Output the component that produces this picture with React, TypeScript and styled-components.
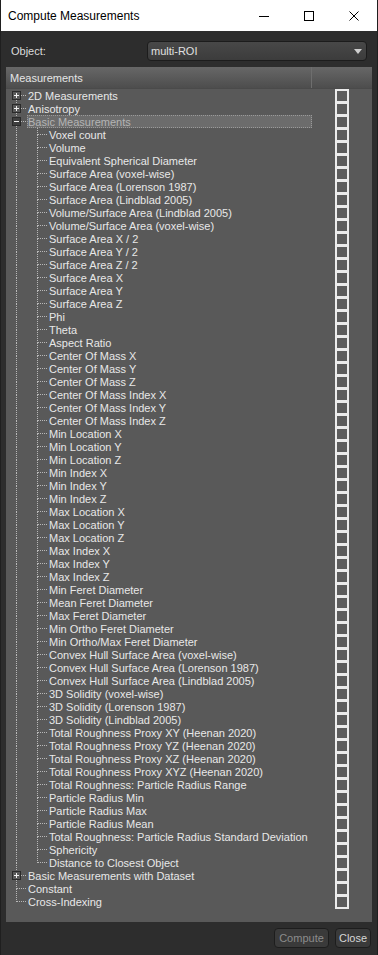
import React from "react";
import styled, { createGlobalStyle } from "styled-components";

const GlobalStyle = createGlobalStyle`
  html, body {
    margin: 0;
    padding: 0;
    background: #2d2d2d;
  }
  body {
    font-family: "Liberation Sans", Arial, sans-serif;
  }
`;

const Window = styled.div`
  width: 378px;
  height: 955px;
  display: flex;
  flex-direction: column;
  background: #2d2d2d;
  box-sizing: border-box;
  border-left: 1px solid #1f1f1f;
  border-right: 1px solid #1f1f1f;
  overflow: hidden;
`;

const TitleBar = styled.div`
  height: 31px;
  flex: none;
  background: #ffffff;
  display: flex;
  align-items: center;
  padding: 0 2px 0 8px;
  margin: 0 -1px;
`;

const Title = styled.div`
  flex: 1;
  font-size: 12px;
  color: #000;
`;

const Caption = styled.div`
  width: 45px;
  height: 31px;
  display: flex;
  align-items: center;
  justify-content: center;
`;

const Body = styled.div`
  flex: 1;
  display: flex;
  flex-direction: column;
  padding: 10px 5px 7px 5px;
  min-height: 0;
`;

const ObjectRow = styled.div`
  display: flex;
  align-items: center;
  height: 20px;
`;

const FieldLabel = styled.div`
  width: 136px;
  padding-left: 5px;
  font-size: 11px;
  color: #dcdcdc;
`;

const Combo = styled.div`
  flex: 1;
  height: 20px;
  margin-right: 5px;
  box-sizing: border-box;
  border: 1px solid #1c1c1c;
  border-radius: 4px;
  background: linear-gradient(#484848, #3c3c3c);
  display: flex;
  align-items: center;
  padding: 0 4px 0 3px;
  font-size: 11px;
  color: #e0e0e0;
`;

const ComboText = styled.div`
  flex: 1;
`;

const Panel = styled.div`
  margin-top: 6px;
  flex: 1;
  display: flex;
  flex-direction: column;
  background: #595959;
  width: 366px;
  min-height: 0;
`;

const Header = styled.div`
  height: 21px;
  flex: none;
  display: flex;
  border-bottom: 1px solid #4a4a4a;
`;

const HeaderCell = styled.div<{ $w: number }>`
  width: ${(p) => p.$w}px;
  box-sizing: border-box;
  background: linear-gradient(#676767, #5a5a5a 50%, #4d4d4d);
  border-right: 1px solid #6e6e6e;
  font-size: 11px;
  color: #e6e6e6;
  padding-left: 4px;
  display: flex;
  align-items: center;
  &:last-child {
    border-right: none;
  }
`;

const Tree = styled.div`
  display: flex;
  flex-direction: column;
`;

const Row = styled.div`
  height: 13px;
  display: flex;
`;

const TreeCol = styled.div`
  width: 306px;
  display: flex;
  flex: none;
`;

const Guide = styled.svg`
  width: 21px;
  height: 13px;
  flex: none;
  display: block;
`;

const Label = styled.div<{ $current?: boolean }>`
  flex: 1;
  height: 13px;
  box-sizing: border-box;
  font-size: 11px;
  line-height: ${(p) => (p.$current ? 12 : 14)}px;
  color: ${(p) => (p.$current ? "#b4b4b4" : "#e8e8e8")};
  white-space: nowrap;
  background: ${(p) => (p.$current ? "#6c6c6c" : "transparent")};
  border: ${(p) => (p.$current ? "1px dotted #9a9a9a" : "none")};
  padding-left: ${(p) => (p.$current ? 0 : 1)}px;
`;

const CheckCol = styled.div`
  width: 60px;
  flex: none;
  display: flex;
  justify-content: center;
`;

const CheckBox = styled.div`
  width: 14px;
  height: 14px;
  flex: none;
  box-sizing: border-box;
  border: 2px solid #ebebeb;
  background: #5c5c5c;
`;

const Footer = styled.div`
  margin-top: 6px;
  height: 20px;
  flex: none;
  display: flex;
  justify-content: flex-end;
  gap: 6px;
  padding-right: 1px;
`;

const Button = styled.div<{ $w: number; $disabled?: boolean }>`
  width: ${(p) => p.$w}px;
  height: 20px;
  box-sizing: border-box;
  border: 1px solid #1d1d1d;
  border-radius: 4px;
  background: #3a3a3a;
  font-size: 11px;
  line-height: 18px;
  text-align: center;
  color: ${(p) => (p.$disabled ? "#8c8c8c" : "#d6d6d6")};
`;

const basic = [
  "Voxel count",
  "Volume",
  "Equivalent Spherical Diameter",
  "Surface Area (voxel-wise)",
  "Surface Area (Lorenson 1987)",
  "Surface Area (Lindblad 2005)",
  "Volume/Surface Area (Lindblad 2005)",
  "Volume/Surface Area (voxel-wise)",
  "Surface Area X / 2",
  "Surface Area Y / 2",
  "Surface Area Z / 2",
  "Surface Area X",
  "Surface Area Y",
  "Surface Area Z",
  "Phi",
  "Theta",
  "Aspect Ratio",
  "Center Of Mass X",
  "Center Of Mass Y",
  "Center Of Mass Z",
  "Center Of Mass Index X",
  "Center Of Mass Index Y",
  "Center Of Mass Index Z",
  "Min Location X",
  "Min Location Y",
  "Min Location Z",
  "Min Index X",
  "Min Index Y",
  "Min Index Z",
  "Max Location X",
  "Max Location Y",
  "Max Location Z",
  "Max Index X",
  "Max Index Y",
  "Max Index Z",
  "Min Feret Diameter",
  "Mean Feret Diameter",
  "Max Feret Diameter",
  "Min Ortho Feret Diameter",
  "Min Ortho/Max Feret Diameter",
  "Convex Hull Surface Area (voxel-wise)",
  "Convex Hull Surface Area (Lorenson 1987)",
  "Convex Hull Surface Area (Lindblad 2005)",
  "3D Solidity (voxel-wise)",
  "3D Solidity (Lorenson 1987)",
  "3D Solidity (Lindblad 2005)",
  "Total Roughness Proxy XY (Heenan 2020)",
  "Total Roughness Proxy YZ (Heenan 2020)",
  "Total Roughness Proxy XZ (Heenan 2020)",
  "Total Roughness Proxy XYZ (Heenan 2020)",
  "Total Roughness: Particle Radius Range",
  "Particle Radius Min",
  "Particle Radius Max",
  "Particle Radius Mean",
  "Total Roughness: Particle Radius Standard Deviation",
  "Sphericity",
  "Distance to Closest Object",
];

type Expander = "none" | "plus" | "minus";

const tree: { label: string; expander: Expander; current?: boolean; children?: string[] }[] = [
  { label: "2D Measurements", expander: "plus" },
  { label: "Anisotropy", expander: "plus" },
  { label: "Basic Measurements", expander: "minus", current: true, children: basic },
  { label: "Basic Measurements with Dataset", expander: "plus" },
  { label: "Constant", expander: "none" },
  { label: "Cross-Indexing", expander: "none" },
];

const DOT = "#b8b8b8";

// one 21x13 column of the branch drawing
const GuideCell = ({
  up,
  down,
  branch,
  expander = "none",
}: {
  up: boolean;
  down: boolean;
  branch: boolean;
  expander?: Expander;
}) => (
  <Guide viewBox="0 0 21 13" shapeRendering="crispEdges">
    {up && <line x1="10.5" y1="0" x2="10.5" y2="7" stroke={DOT} strokeDasharray="1 1" />}
    {down && <line x1="10.5" y1="7" x2="10.5" y2="13" stroke={DOT} strokeDasharray="1 1" />}
    {branch && <line x1="11" y1="6.5" x2="21" y2="6.5" stroke={DOT} strokeDasharray="1 1" />}
    {expander !== "none" && (
      <>
        <rect
          x="6.5"
          y="2.5"
          width="8"
          height="8"
          fill={expander === "minus" ? "#3e3e3e" : "#595959"}
          stroke="#2a2a2a"
        />
        <line x1="8" y1="6.5" x2="13" y2="6.5" stroke="#f0f0f0" />
        {expander === "plus" && <line x1="10.5" y1="4" x2="10.5" y2="9" stroke="#f0f0f0" />}
      </>
    )}
  </Guide>
);

export default function App() {
  const rows: React.ReactNode[] = [];
  tree.forEach((node, i) => {
    const last = i === tree.length - 1;
    rows.push(
      <Row key={node.label}>
        <TreeCol>
          <GuideCell up={i > 0} down={!last} branch expander={node.expander} />
          <Label $current={node.current}>{node.label}</Label>
        </TreeCol>
        <CheckCol>
          <CheckBox />
        </CheckCol>
      </Row>
    );
    node.children?.forEach((child, j) => {
      const lastChild = j === node.children!.length - 1;
      rows.push(
        <Row key={node.label + child}>
          <TreeCol>
            <GuideCell up={!last} down={!last} branch={false} />
            <GuideCell up down={!lastChild} branch />
            <Label>{child}</Label>
          </TreeCol>
          <CheckCol>
            <CheckBox />
          </CheckCol>
        </Row>
      );
    });
  });

  return (
    <Window>
      <GlobalStyle />
      <TitleBar>
        <Title>Compute Measurements</Title>
        <Caption>
          <svg width="10" height="10" viewBox="0 0 10 10" shapeRendering="crispEdges">
            <line x1="0" y1="5.5" x2="10" y2="5.5" stroke="#000" />
          </svg>
        </Caption>
        <Caption>
          <svg width="10" height="10" viewBox="0 0 10 10" shapeRendering="crispEdges">
            <rect x="0.5" y="0.5" width="9" height="9" fill="none" stroke="#000" />
          </svg>
        </Caption>
        <Caption>
          <svg width="10" height="10" viewBox="0 0 10 10">
            <path d="M0.5 0.5 L9.5 9.5 M9.5 0.5 L0.5 9.5" stroke="#000" strokeWidth="1" />
          </svg>
        </Caption>
      </TitleBar>
      <Body>
        <ObjectRow>
          <FieldLabel>Object:</FieldLabel>
          <Combo>
            <ComboText>multi-ROI</ComboText>
            <svg width="8" height="5" viewBox="0 0 8 5">
              <path d="M0 0 H8 L4 5 Z" fill="#cfcfcf" />
            </svg>
          </Combo>
        </ObjectRow>
        <Panel>
          <Header>
            <HeaderCell $w={306}>Measurements</HeaderCell>
            <HeaderCell $w={60} />
          </Header>
          <Tree>{rows}</Tree>
        </Panel>
        <Footer>
          <Button $w={55} $disabled>
            Compute
          </Button>
          <Button $w={36}>Close</Button>
        </Footer>
      </Body>
    </Window>
  );
}
